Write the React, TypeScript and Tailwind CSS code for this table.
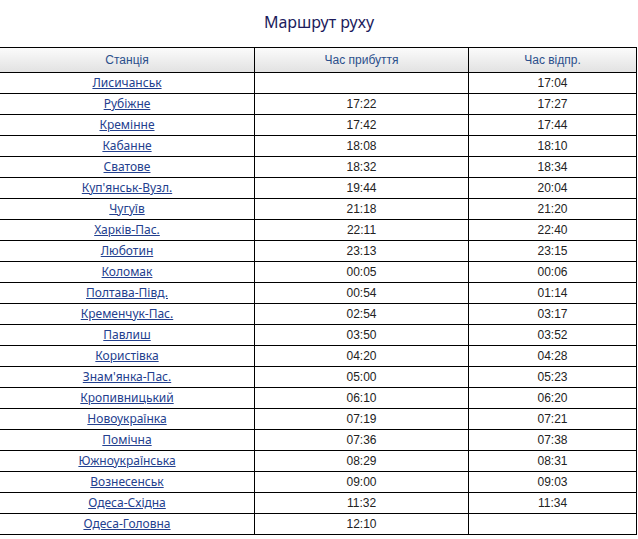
import React from "react";

const rows: [string, string, string][] = [
  ["Лисичанськ", "", "17:04"],
  ["Рубіжне", "17:22", "17:27"],
  ["Кремінне", "17:42", "17:44"],
  ["Кабанне", "18:08", "18:10"],
  ["Сватове", "18:32", "18:34"],
  ["Куп'янськ-Вузл.", "19:44", "20:04"],
  ["Чугуїв", "21:18", "21:20"],
  ["Харків-Пас.", "22:11", "22:40"],
  ["Люботин", "23:13", "23:15"],
  ["Коломак", "00:05", "00:06"],
  ["Полтава-Півд.", "00:54", "01:14"],
  ["Кременчук-Пас.", "02:54", "03:17"],
  ["Павлиш", "03:50", "03:52"],
  ["Користівка", "04:20", "04:28"],
  ["Знам'янка-Пас.", "05:00", "05:23"],
  ["Кропивницький", "06:10", "06:20"],
  ["Новоукраїнка", "07:19", "07:21"],
  ["Помічна", "07:36", "07:38"],
  ["Южноукраїнська", "08:29", "08:31"],
  ["Вознесенськ", "09:00", "09:03"],
  ["Одеса-Східна", "11:32", "11:34"],
  ["Одеса-Головна", "12:10", ""],
];

const arial = { fontFamily: '"Liberation Sans", Arial, sans-serif' };
const noto = { fontFamily: '"Noto Sans", "Open Sans", sans-serif' };

export default function App() {
  return (
    <div className="w-[638px] h-[539px] overflow-hidden bg-white">
      <div
        className="h-[47px] flex items-start justify-center pt-[11px] text-[16px] leading-[22px] text-[#1c1b5c]"
        style={noto}
      >
        Маршрут руху
      </div>
      <table className="-ml-px w-[637px] border-collapse table-fixed">
        <colgroup>
          <col className="w-[255px]" />
          <col className="w-[214px]" />
          <col className="w-[168px]" />
        </colgroup>
        <thead>
          <tr className="h-[25px] bg-gradient-to-b from-[#fbfbfb] to-[#e1e1e1]">
            {["Станція", "Час прибуття", "Час відпр."].map((h) => (
              <th
                key={h}
                className="border border-black p-0 text-center font-normal text-[12px] leading-[23px] text-[#2b4f8c]"
                style={arial}
              >
                {h}
              </th>
            ))}
          </tr>
        </thead>
        <tbody>
          {rows.map(([s, a, d]) => (
            <tr key={s} className="h-[21px]">
              <td
                className="border border-black p-0 text-center text-[12px] leading-[20px] h-[21px]"
                style={noto}
              >
                <a href="#" className="text-[#23408e] underline leading-[20px]">
                  {s}
                </a>
              </td>
              <td
                className="border border-black p-0 text-center text-[12px] text-[#222] leading-[20px] h-[21px]"
                style={arial}
              >
                {a}
              </td>
              <td
                className="border border-black p-0 text-center text-[12px] text-[#222] leading-[20px] h-[21px]"
                style={arial}
              >
                {d}
              </td>
            </tr>
          ))}
        </tbody>
      </table>
    </div>
  );
}
